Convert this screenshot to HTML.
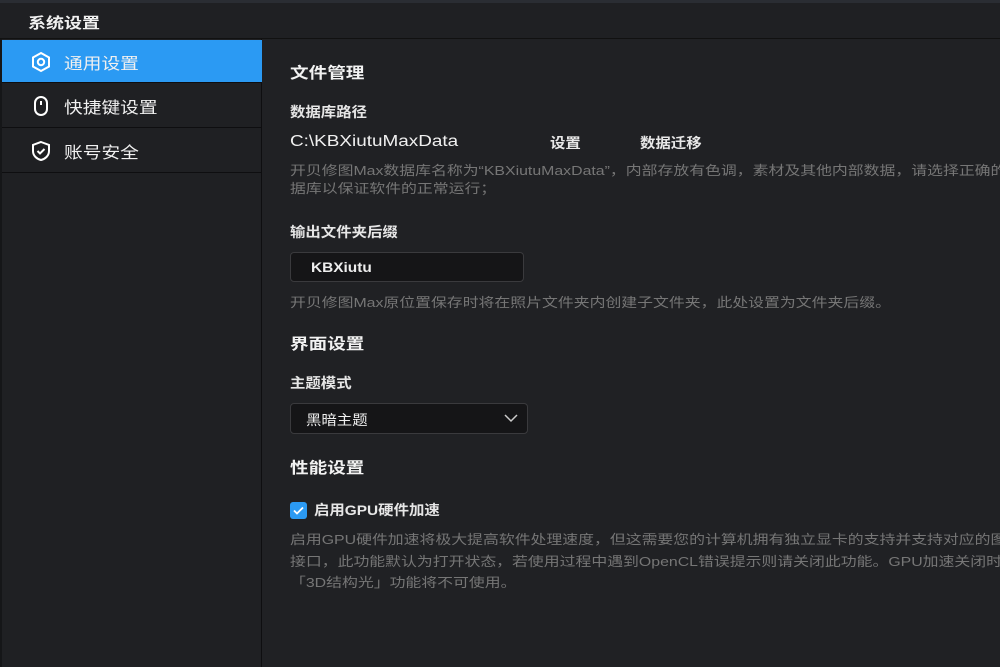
<!DOCTYPE html>
<html><head><meta charset="utf-8"><style>
*{margin:0;padding:0;box-sizing:border-box}
body{width:1000px;height:667px;overflow:hidden;background:#202124;font-family:"Liberation Sans","Noto Sans CJK SC",sans-serif;color:#e8e8e8;position:relative}
.title{position:absolute;left:0;top:0;width:1000px;height:39px;background:#1f2023;border-bottom:1px solid #111;border-top:3px solid #2a2d33}
.title span{position:absolute;left:28px;top:9px;font-size:15px;font-weight:bold;color:#f0f0f0;transform:scaleX(1.2);transform-origin:0 0}
.side{position:absolute;left:0;top:39px;width:262px;height:628px;background:#1f2023;border-right:1px solid #0e0e10;border-left:2px solid #151618}
.item{position:absolute;left:0;width:260px;height:44px;border-bottom:1px solid #0e0e10}
.item span{position:absolute;left:62px;top:10px;font-size:16px;color:#f0f0f0;transform:scaleX(1.17);transform-origin:0 0}
.item svg{position:absolute;left:28px;top:11px}
.act{background:#2b9af3}
.c{position:absolute;left:290px;font-size:13px;white-space:nowrap;transform-origin:0 0}
h{position:absolute;left:290px;font-size:15.5px;font-weight:bold;color:#f2f2f2;transform:scaleX(1.2);transform-origin:0 0}
.lab{position:absolute;left:290px;font-size:14px;font-weight:bold;color:#e6e6e6;white-space:nowrap;transform:scaleX(1.1);transform-origin:0 0}
.d{position:absolute;left:290px;font-size:13px;color:#767676;white-space:nowrap;transform:scaleX(1.22);transform-origin:0 0}
.box{position:absolute;background:#151517;border:1px solid #3a3a3d;border-radius:4px}
</style></head><body>
<div class="title"><span>系统设置</span></div>
<div class="side">
<div class="item act" style="top:1px;height:43px"><svg width="22" height="22" viewBox="0 0 22 22" fill="none" stroke="#fff" stroke-width="2"><path d="M11 2 19 6.5v9L11 20 3 15.5v-9z"/><circle cx="11" cy="11" r="3.2"/></svg><span>通用设置</span></div>
<div class="item" style="top:45px"><svg width="22" height="22" viewBox="0 0 22 22" fill="none" stroke="#fff" stroke-width="2"><rect x="5" y="2" width="12" height="18" rx="6"/><path d="M11 6v4"/></svg><span>快捷键设置</span></div>
<div class="item" style="top:90px"><svg width="22" height="22" viewBox="0 0 22 22" fill="none" stroke="#fff" stroke-width="2"><path d="M11 2 19 5v6c0 5-4 8-8 9-4-1-8-4-8-9V5z"/><path d="M7.5 11l2.5 2.5 4.5-4.5"/></svg><span>账号安全</span></div>
</div>
<h style="top:61px">文件管理</h>
<div class="lab" style="top:102px">数据库路径</div>
<div class="c" style="top:133px;font-size:15.5px;color:#f0f0f0;transform:scaleX(1.22)">C:\KBXiutuMaxData</div>
<div class="c" style="top:133px;left:550px;font-weight:bold;font-size:14px;transform:scaleX(1.1)">设置</div>
<div class="c" style="top:133px;left:640px;font-weight:bold;font-size:14px;transform:scaleX(1.1)">数据迁移</div>
<div class="d" style="top:162px;line-height:18px">开贝修图Max数据库名称为“KBXiutuMaxData”，内部存放有色调，素材及其他内部数据，请选择正确的数<br>据库以保证软件的正常运行；</div>
<div class="lab" style="top:222px">输出文件夹后缀</div>
<div class="box" style="left:290px;top:252px;width:234px;height:30px"><span style="position:absolute;left:20px;top:6px;font-size:14px;font-weight:bold;color:#eee;transform:scaleX(1.1);transform-origin:0 0">KBXiutu</span></div>
<div class="d" style="top:292px">开贝修图Max原位置保存时将在照片文件夹内创建子文件夹，此处设置为文件夹后缀。</div>
<h style="top:332px">界面设置</h>
<div class="lab" style="top:373px">主题模式</div>
<div class="box" style="left:290px;top:403px;width:238px;height:31px"><span style="position:absolute;left:15px;top:6px;font-size:14px;color:#eee;transform:scaleX(1.1);transform-origin:0 0">黑暗主题</span><svg style="position:absolute;right:9px;top:9px" width="14" height="10" viewBox="0 0 14 10" fill="none" stroke="#ccc" stroke-width="1.5"><path d="M1 2l6 6 6-6"/></svg></div>
<h style="top:456px">性能设置</h>
<div style="position:absolute;left:290px;top:502px;width:17px;height:17px;background:#2b9af3;border-radius:3px"><svg width="17" height="17" viewBox="0 0 17 17" fill="none" stroke="#fff" stroke-width="1.8"><path d="M4 8.5l3 3 6-6"/></svg></div>
<div class="lab" style="top:500px;left:314px;font-size:14px">启用GPU硬件加速</div>
<div class="d" style="top:529px;line-height:21.5px">启用GPU硬件加速将极大提高软件处理速度，但这需要您的计算机拥有独立显卡的支持并支持对应的图形<br>接口，此功能默认为打开状态，若使用过程中遇到OpenCL错误提示则请关闭此功能。GPU加速关闭时，<br>「3D结构光」功能将不可使用。</div>
</body></html>
